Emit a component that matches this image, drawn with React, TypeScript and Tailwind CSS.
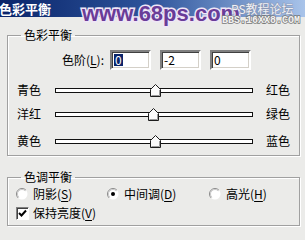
import React from 'react'

const cjk = { fontFamily: '"Noto Sans CJK SC", "Liberation Sans", sans-serif' }

function Sunken({ children }: { children?: React.ReactNode }) {
  return (
    <div className="flex h-[20px] w-[41px] items-center border-2 border-t-[#808080] border-l-[#808080] border-r-white border-b-white bg-white pl-[2px] text-[12px] leading-none shadow-[inset_1px_1px_0_#404040,inset_-1px_-1px_0_#d4d0c8]">
      {children}
    </div>
  )
}

function Thumb({ value }: { value: number }) {
  // track is 198px wide, values run -100..100
  const center = 99 + (value / 100) * 99
  return (
    <svg
      width="11"
      height="13"
      viewBox="0 0 11 13"
      className="absolute top-[-5px]"
      style={{ left: center - 5.5 }}
    >
      <polygon points="0.5,12.5 0.5,5.5 5.5,0.5 10.5,5.5 10.5,12.5" fill="#fafafa" stroke="#1c1c1c" />
      <polyline points="9.5,6 9.5,11.5 1.5,11.5" fill="none" stroke="#9a9a9a" />
    </svg>
  )
}

function SliderRow({ left, right, value, className }: { left: string; right: string; value: number; className?: string }) {
  return (
    <div className={`flex h-[24px] items-center pl-[9px] text-[12px] ${className ?? ''}`}>
      <span className="w-[38px]">{left}</span>
      <div className="relative h-[5px] w-[198px] border border-[#111] bg-white">
        <Thumb value={value} />
      </div>
      <span className="ml-[13px]">{right}</span>
    </div>
  )
}

function Radio({ checked }: { checked?: boolean }) {
  return (
    <svg width="12" height="12" viewBox="0 0 12 12" className="shrink-0">
      <circle cx="6" cy="6" r="5.5" fill="#fff" />
      <path d="M9.9 2.1 A5.5 5.5 0 0 0 2.1 9.9" fill="none" stroke="#8a8a8a" />
      <path d="M9.2 2.8 A4.5 4.5 0 0 0 2.8 9.2" fill="none" stroke="#c8c8c8" />
      {checked && <circle cx="6" cy="6" r="2" fill="#000" />}
    </svg>
  )
}

function Mn({ c }: { c: string }) {
  return (
    <>
      (<span className="underline underline-offset-2">{c}</span>)
    </>
  )
}

export default function App() {
  return (
    <div className="relative h-[240px] w-[305px] overflow-hidden bg-[#ebebe9] text-black" style={cjk}>
      {/* title bar */}
      <div className="flex h-[17px] items-center bg-gradient-to-r from-[#0a246a] via-[#2f559c] to-[#a9c4ea]">
        <span className="ml-[-1px] text-[13px] font-bold leading-none text-white">色彩平衡</span>
      </div>

      {/* watermark */}
      <div className="absolute left-[82px] top-[1px] font-['Liberation_Sans'] text-[22px] font-bold leading-[25px] text-[#6a3c98] [-webkit-text-stroke:3px_#efe6f7] [paint-order:stroke_fill]">
        www.68ps.com
      </div>
      <div className="absolute left-[231px] top-[2px] text-[12px] leading-[13px] text-[#eef0f6] [-webkit-text-stroke:1px_#8a94ad] [paint-order:stroke_fill]">
        PS教程论坛
      </div>
      <div className="absolute left-[222px] top-[15px] font-['Liberation_Mono'] text-[10px] font-bold leading-[11px] text-[#f2f2f2] [-webkit-text-stroke:1.5px_#777] [paint-order:stroke_fill]">
        BBS.16XX8.COM
      </div>

      {/* colour balance group */}
      <fieldset className="ml-[7px] mt-[11px] w-[293px] border border-[#a0a0a0] pb-[2px] shadow-[1px_1px_0_#fff,inset_1px_1px_0_#fff]">
        <legend className="ml-[13px] px-[3px] text-[12px] leading-[14px]">色彩平衡</legend>
        <div className="mt-[8px] flex items-center pl-[47px] text-[12px]">
          <span className="w-[55px] pr-[6px] text-right">
            色阶<Mn c="L" />:
          </span>
          <Sunken>
            <span className="bg-[#0a246a] px-[1px] text-white">0</span>
          </Sunken>
          <div className="ml-[9px]">
            <Sunken>-2</Sunken>
          </div>
          <div className="ml-[9px]">
            <Sunken>0</Sunken>
          </div>
        </div>
        <SliderRow className="mt-[8px]" left="青色" right="红色" value={0} />
        <SliderRow left="洋红" right="绿色" value={-2} />
        <SliderRow className="mt-[3px]" left="黄色" right="蓝色" value={0} />
      </fieldset>

      {/* tone balance group */}
      <fieldset className="ml-[7px] mt-[14px] w-[293px] border border-[#a0a0a0] pb-[4px] shadow-[1px_1px_0_#fff,inset_1px_1px_0_#fff]">
        <legend className="ml-[13px] px-[3px] text-[12px] leading-[14px]">色调平衡</legend>
        <div className="mt-[2px] flex h-[16px] items-center pl-[8px] text-[12px]">
          <div className="flex w-[91px] items-center gap-[5px]">
            <Radio />
            <span>
              阴影<Mn c="S" />
            </span>
          </div>
          <div className="flex w-[102px] items-center gap-[5px]">
            <Radio checked />
            <span>
              中间调<Mn c="D" />
            </span>
          </div>
          <div className="flex items-center gap-[5px]">
            <Radio />
            <span>
              高光<Mn c="H" />
            </span>
          </div>
        </div>
        <div className="mt-[3px] flex h-[16px] items-center gap-[4px] pl-[8px] text-[12px]">
          <div className="flex h-[13px] w-[13px] items-center justify-center border border-t-[#808080] border-l-[#808080] border-r-white border-b-white bg-white shadow-[inset_1px_1px_0_#404040]">
            <svg width="9" height="9" viewBox="0 0 9 9">
              <path d="M1 4 L3.5 6.5 L8 1.5" fill="none" stroke="#000" strokeWidth="2" />
            </svg>
          </div>
          <span>
            保持亮度<Mn c="V" />
          </span>
        </div>
      </fieldset>
    </div>
  )
}
